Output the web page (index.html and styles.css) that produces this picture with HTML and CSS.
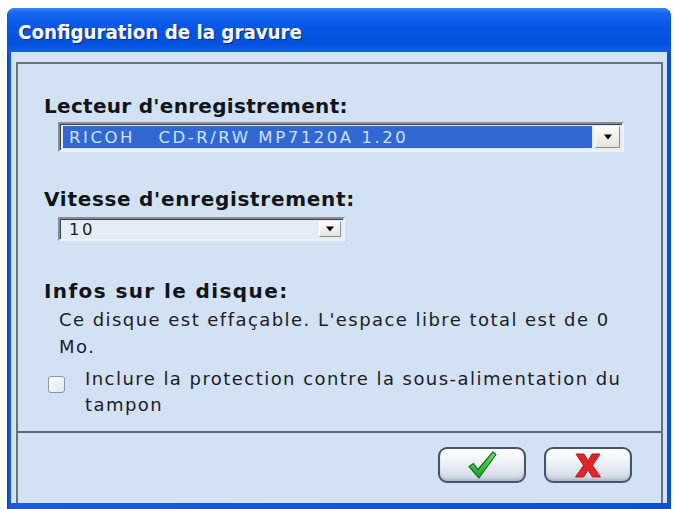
FILE: index.html
```html
<!DOCTYPE html>
<html lang="fr">
<head>
<meta charset="utf-8">
<title>Configuration de la gravure</title>
<link rel="stylesheet" href="styles.css">
</head>
<body>
<div class="window">
  <div class="titlebar"><span class="title">Configuration de la gravure</span></div>
  <div class="client">
    <div class="frame">
      <div class="content">
        <div class="label label-drive">Lecteur d'enregistrement:</div>
        <div class="select select-drive">
          <div class="sel-value sel-highlight">RICOH   CD-R/RW MP7120A 1.20</div>
          <div class="sel-btn"><svg width="10" height="6" viewBox="0 0 10 6"><path d="M1 0.5h8L5 5.5z" fill="#000"/></svg></div>
        </div>
        <div class="label label-speed">Vitesse d'enregistrement:</div>
        <div class="select select-speed">
          <div class="sel-value">10</div>
          <div class="sel-btn"><svg width="10" height="6" viewBox="0 0 10 6"><path d="M1 0.5h8L5 5.5z" fill="#000"/></svg></div>
        </div>
        <div class="label label-info">Infos sur le disque:</div>
        <p class="info">Ce disque est effaçable. L'espace libre total est de 0 Mo.</p>
        <label class="check">
          <span class="box"></span>
          <span class="check-text">Inclure la protection contre la sous-alimentation du tampon</span>
        </label>
      </div>
      <div class="footer">
        <button class="btn btn-ok" type="button" aria-label="OK">
          <svg width="32" height="30" viewBox="0 0 32 30">
            <defs>
              <linearGradient id="gck" x1="0" y1="0" x2="0" y2="1">
                <stop offset="0" stop-color="#6fe06a"/>
                <stop offset="1" stop-color="#1c9a24"/>
              </linearGradient>
            </defs>
            <path d="M3 16.5 L7.5 13.5 L12 19.5 L27 2 L30 4.5 L13 28 Z" fill="url(#gck)" stroke="#16701c" stroke-width="1.2" stroke-linejoin="round"/>
          </svg>
        </button>
        <button class="btn btn-cancel" type="button" aria-label="Annuler">
          <svg width="28" height="27" viewBox="0 0 28 27">
            <path d="M2 2 H10 L14 9 L18 2 H26 L18.5 13.5 L26.5 25 H18.5 L14 18 L9.5 25 H1.5 L9.5 13.5 Z" fill="#e3262b" stroke="#b41419" stroke-width="1" stroke-linejoin="round"/>
          </svg>
        </button>
      </div>
    </div>
  </div>
</div>
</body>
</html>
```
FILE: styles.css
```css
* { box-sizing: border-box; }

html, body {
  margin: 0;
  padding: 0;
  background: #ffffff;
}

body {
  width: 674px;
  height: 509px;
  overflow: hidden;
  font-family: "DejaVu Sans", Verdana, sans-serif;
  color: #161a20;
}

.window {
  margin: 8px 0 0 7px;
  width: 664px;
  height: 501px;
  border-radius: 8px 8px 0 0;
  background: linear-gradient(to right, #0a3fc4 0, #1a5ae0 3px, #0a4fd8 100%);
  display: flex;
  flex-direction: column;
  overflow: hidden;
}

.titlebar {
  height: 44px;
  flex: none;
  display: flex;
  align-items: center;
  padding: 3px 0 0 11px;
  background: linear-gradient(to bottom, #3d86f5 0, #1464ee 12%, #0556e6 45%, #0250dc 80%, #1060ea 100%);
}

.title {
  font-family: "DejaVu Sans Condensed", "DejaVu Sans", sans-serif;
  font-stretch: condensed;
  font-weight: bold;
  font-size: 20.3px;
  color: #ffffff;
  text-shadow: 1px 1px 1px #0a2a80;
}

.client {
  flex: 1;
  margin: 0 4px 6px 4px;
  padding: 10px 4px 0 5px;
  background: #d3e3f4;
  display: flex;
}

.frame {
  flex: 1;
  border: 2px solid #69717c;
  border-bottom: 0;
  background: #d2e2f4;
  display: flex;
  flex-direction: column;
}

.content {
  height: 369px;
  padding: 30px 0 0 26px;
  border-bottom: 2px solid #5f6670;
}

.label {
  font-weight: bold;
  font-size: 20px;
  line-height: 24px;
  color: #111418;
}

.label-drive { letter-spacing: 0.3px; }
.label-speed { margin-top: 35px; letter-spacing: 0.7px; }
.label-info { margin-top: 38px; letter-spacing: 1.4px; }

.select {
  display: flex;
  align-items: center;
  margin: 4px 0 0 14px;
  border: 2px solid;
  border-color: #8a8d92 #eef2f7 #eef2f7 #8a8d92;
  box-shadow: inset 1px 1px 0 #3e4248;
  background: #e4edf7;
  padding: 2px 2px 2px 3px;
}

.select-drive { width: 566px; height: 30px; }
.select-speed { width: 287px; height: 24px; margin-top: 6px; }

.sel-value {
  flex: 1;
  height: 100%;
  display: flex;
  align-items: center;
  padding-left: 6px;
  font-size: 16.5px;
  letter-spacing: 2.55px;
  color: #1a1e24;
  white-space: pre;
}

.sel-highlight {
  background: #3168d2;
  color: #cfe0ff;
}

.sel-btn {
  flex: none;
  width: 25px;
  height: 100%;
  margin-left: 3px;
  display: flex;
  align-items: center;
  justify-content: center;
  background: linear-gradient(to bottom, #fbfbf8, #e6e4dc);
  border: 1px solid;
  border-color: #ffffff #8c8c88 #8c8c88 #ffffff;
}

.select-speed .sel-btn { width: 22px; }

.info {
  margin: 3px 0 0 15px;
  width: 570px;
  font-size: 18px;
  letter-spacing: 1.45px;
  line-height: 27px;
  color: #1c2026;
}

.check {
  display: flex;
  align-items: flex-start;
  margin: 6px 0 0 4px;
}

.box {
  flex: none;
  width: 17px;
  height: 17px;
  margin-top: 10px;
  border: 1px solid #8798ae;
  border-radius: 3px;
  background: linear-gradient(to bottom right, #ffffff, #dde6f0);
}

.check-text {
  margin-left: 20px;
  width: 560px;
  font-size: 18px;
  letter-spacing: 1.45px;
  line-height: 26px;
  color: #1c2026;
}

.footer {
  flex: 1;
  display: flex;
  justify-content: flex-end;
  align-items: flex-start;
  gap: 18px;
  padding: 14px 29px 0 0;
}

.btn {
  width: 88px;
  height: 36px;
  border: 2px solid #46546a;
  border-radius: 9px;
  background: linear-gradient(to bottom, #ffffff 0, #f1f4f8 35%, #dce3ec 75%, #c6d0dd 100%);
  box-shadow: inset 0 -2px 2px rgba(120, 135, 160, 0.35);
  display: flex;
  align-items: center;
  justify-content: center;
  padding: 0;
}
```
